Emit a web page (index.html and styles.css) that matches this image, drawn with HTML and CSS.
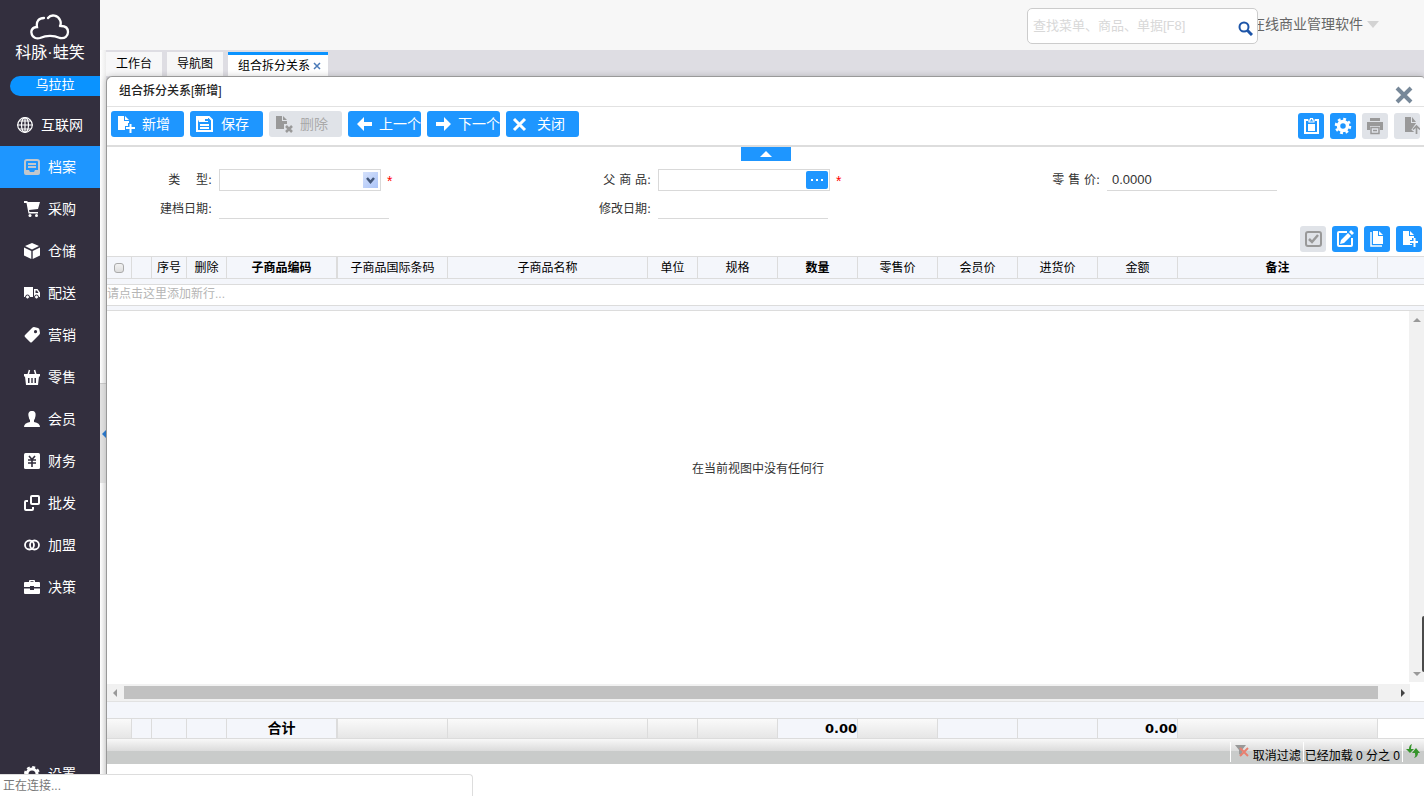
FILE: index.html
```
<!DOCTYPE html>
<html lang="zh-CN">
<head>
    <meta charset="UTF-8">
    <meta name="viewport" content="width=device-width, initial-scale=1.0">
    <title>组合拆分关系</title>
    <link rel="stylesheet" href="styles.css">
</head>
<body>
    <aside class="sidebar">
        <div class="logo">
            <svg width="40" height="27" viewBox="0 0 40 27" fill="none" stroke="#fff" stroke-width="2.300" stroke-linecap="round">
                <path d="M14 4C9 4 6 7 7 13C2 13 1 17 1.500 19C2 24 7 25 10 24C17 21 23 21 30 24C35 25 38 22 38 18C38 14 35 12 31 12"/>
                <path d="M18 4C21 0 28 1 30 6C31 8 31 10 30 12"/>
            </svg>
            <span class="logo-text">科脉·蛙笑</span>
        </div>
        <div class="shop">乌拉拉</div>
        <nav class="menu">
            <a href="#">
                <svg class="ico" viewBox="0 0 16 16" fill="none" stroke="#fff" stroke-width="1.200"><circle cx="8" cy="8" r="7.300"/><ellipse cx="8" cy="8" rx="3.500" ry="7.300"/><path d="M8 0V16M0 8H16M2 4H14M2 12H14"/></svg>
                互联网
            </a>
            <a href="#" class="active">
                <svg class="ico" viewBox="0 0 16 16" fill="none" stroke="#c3c7cc" stroke-width="2"><path d="M1 12V3Q1 1 3 1H13Q15 1 15 3V12M4 5H12M4 8H12"/><path d="M0 11H5L6 13H10L11 11H16V14Q16 16 14 16H2Q0 16 0 14Z" fill="#c3c7cc" stroke="none"/></svg>
                档案
            </a>
            <a href="#">
                <svg class="ico" viewBox="0 0 16 16" fill="#fff"><path d="M0 0H3L4 1H16L14 8L5 9L5.500 11H14V12.500H4.500L2.500 2H0Z"/><circle cx="6" cy="14.500" r="1.500"/><circle cx="12.500" cy="14.500" r="1.500"/></svg>
                采购
            </a>
            <a href="#">
                <svg class="ico" viewBox="0 0 16 16" fill="#fff"><path d="M8 0L15 3L8 6.500L1 3ZM0 4.500L7.300 8V16L0 12.500ZM16 4.500L8.700 8V16L16 12.500Z"/></svg>
                仓储
            </a>
            <a href="#">
                <svg class="ico" viewBox="0 0 16 16" fill="#fff"><path fill-rule="evenodd" d="M0 2H9V12H0ZM10 4H13.500L16 7.500V12H10ZM11.500 5.500V8H14.500L13 5.500Z"/><g stroke="#332f3e"><circle cx="3.500" cy="12" r="2"/><circle cx="12.500" cy="12" r="2"/></g></svg>
                配送
            </a>
            <a href="#">
                <svg class="ico" viewBox="0 0 16 16" fill="#fff"><path fill-rule="evenodd" d="M8 1Q9 0 10 0L14 1Q15.500 1.500 15.500 3L16 6Q16 7 15 8L8 15Q7 16 6 15L1 10Q0 9 1 8ZM11.500 3A1.600 1.600 0 1 0 11.600 6.200A1.600 1.600 0 1 0 11.500 3Z"/></svg>
                营销
            </a>
            <a href="#">
                <svg class="ico" viewBox="0 0 16 16" fill="none" stroke="#fff"><path d="M4 6L5.500 1M12 6L10.500 1" stroke-width="1.500"/><path fill="#fff" stroke="none" fill-rule="evenodd" d="M0 5H16V7.500H15L14 16H2L1 7.500H0ZM4 9V14H5.500V9ZM7.300 9V14H8.700V9ZM10.500 9V14H12V9Z"/></svg>
                零售
            </a>
            <a href="#">
                <svg class="ico" viewBox="0 0 16 16" fill="#fff"><path d="M8 0C11 0 12 2 11.500 5Q11 8 10 9V11Q16 12 16 16H0Q0 12 6 11V9Q5 8 4.500 5C4 2 5 0 8 0Z"/></svg>
                会员
            </a>
            <a href="#">
                <svg class="ico" viewBox="0 0 16 16"><rect width="16" height="16" rx="1.500" fill="#fff"/><path d="M5 3L8 6.500L11 3M4 7H12M4 10H12M8 6.500V14" fill="none" stroke="#332f3e" stroke-width="1.600"/></svg>
                财务
            </a>
            <a href="#">
                <svg class="ico" viewBox="0 0 16 16" fill="none" stroke="#fff" stroke-width="2"><rect x="7" y="1" width="8" height="8" rx="1"/><path d="M4 6H2Q1 6 1 7V14Q1 15 2 15H8Q9 15 9 14V12"/></svg>
                批发
            </a>
            <a href="#">
                <svg class="ico" viewBox="0 0 16 16" fill="none" stroke="#fff" stroke-width="1.800"><circle cx="5.500" cy="8" r="4.500"/><circle cx="10.500" cy="8" r="4.500"/></svg>
                加盟
            </a>
            <a href="#">
                <svg class="ico" viewBox="0 0 16 16" fill="#fff"><path fill-rule="evenodd" d="M5 3V2Q5 1 6 1H10Q11 1 11 2V3H15Q16 3 16 4V8H10V7H6V8H0V4Q0 3 1 3ZM6.500 2.300V3H9.500V2.300ZM0 9.500H6V11H10V9.500H16V14Q16 15 15 15H1Q0 15 0 14Z"/></svg>
                决策
            </a>
            <a href="#" class="setting">
                <svg class="ico" viewBox="0 0 16 16" fill="none" stroke="#fff"><circle cx="8" cy="8" r="5" stroke-width="3"/><circle cx="8" cy="8" r="7" stroke-width="2" stroke-dasharray="3 2.500"/></svg>
                设置
            </a>
        </nav>
    </aside>

    <div class="main">
        <header class="header">
            <label class="search">
                <input type="text" placeholder="查找菜单、商品、单据[F8]" aria-label="查找">
                <svg width="15" height="15" viewBox="0 0 15 15" fill="none" stroke="#1d55a8" stroke-width="2"><circle cx="6" cy="6" r="4.500"/><path d="M9.500 9.500L14 14" stroke-width="3"/></svg>
            </label>
            <div class="user">在线商业管理软件<i class="caret"></i></div>
        </header>

        <div class="workspace">
            <div class="splitter"><button class="splitter-bar" aria-label="收起"></button></div>
            <div class="content">
                <div class="tabs">
                    <a href="#" class="tab">工作台</a>
                    <a href="#" class="tab">导航图</a>
                    <a href="#" class="tab tab-on">组合拆分关系<svg width="8" height="8" viewBox="0 0 8 8" stroke="#4a7ab8" stroke-width="1.500"><path d="M1 1L7 7M7 1L1 7"/></svg></a>
                </div>

                <section class="window">
                    <div class="title-bar">
                        <h1>组合拆分关系[新增]</h1>
                        <button class="close" aria-label="关闭窗口"><svg width="18" height="18" viewBox="0 0 18 18" stroke="#778899" stroke-width="4"><path d="M2 2L16 16M16 2L2 16"/></svg></button>
                    </div>

                    <div class="toolbar">
                        <button class="btn"><svg viewBox="0 0 18 18" fill="#fff"><path d="M1 1H7V6H12V15H1ZM8 1L12 5H8Z"/><path d="M8 13H18M13 8V18" stroke="#1e96ff" stroke-width="4"/><path d="M9 13H18M13.500 9V18" stroke="#fff" stroke-width="2"/></svg>新增</button>
                        <button class="btn"><svg viewBox="0 0 18 18" fill="none" stroke="#fff" stroke-width="2"><path d="M1 2H13L16 5V16H1ZM4 10H13M4 13H13"/><path d="M1 2H12V7H3Z" fill="#fff" stroke="none"/><path d="M9 5H12" stroke="#1e96ff"/></svg>保存</button>
                        <button class="btn" disabled><svg viewBox="0 0 18 18" fill="#999"><path d="M1 1H7V6H12V9H9V14H1ZM8 1L12 5H8Z"/><path d="M11 11L17 17M17 11L11 17" stroke="#999" stroke-width="2.500"/></svg>删除</button>
                        <button class="btn"><svg viewBox="0 0 18 18" fill="#fff"><path d="M3 9L10 2V7H18V11H10V16Z"/></svg>上一个</button>
                        <button class="btn"><svg viewBox="0 0 18 18" fill="#fff"><path d="M18 9L11 2V7H3V11H11V16Z"/></svg>下一个</button>
                        <button class="btn"><svg viewBox="0 0 18 18" stroke="#fff" stroke-width="3"><path d="M2 4L13 15M13 4L2 15"/></svg>关闭</button>
                        <div class="tools">
                            <button class="tool" aria-label="粘贴"><svg viewBox="0 0 18 18" fill="none" stroke="#fff"><rect x="3" y="3" width="13" height="13" stroke-width="2"/><path d="M6 1H13V6H6Z" fill="#1e96ff" stroke="none"/><path d="M7 5V3H8.500V1.500H10.500V3H12V5Z" stroke-width="1.200"/><path d="M6 7H13V14H6Z" fill="#fff" stroke="none"/></svg></button>
                            <button class="tool" aria-label="设置"><svg viewBox="0 0 18 18" fill="none" stroke="#fff"><circle cx="9" cy="9" r="4.500" stroke-width="3.500"/><circle cx="9" cy="9" r="7" stroke-width="2.500" stroke-dasharray="2.800 2.700"/></svg></button>
                            <button class="tool" disabled aria-label="打印"><svg viewBox="0 0 18 18" fill="#999"><path d="M4 1H14V4H4ZM1 5H17V13H14V9H4V13H1Z"/><path d="M5 10.500H13V16.500H5ZM7 13.500H11" fill="none" stroke="#999" stroke-width="1.500"/></svg></button>
                            <button class="tool tool-export" disabled aria-label="导出"><svg viewBox="0 0 18 18" fill="#999"><path d="M3 0H9V6H14V15H3ZM10 0L14 5H10Z"/><path d="M14.500 18V8M11 14L14.500 9L18 14" fill="none" stroke="#e0e3e8" stroke-width="4"/><path d="M14.500 17V10M11 12.500L14.500 9L18 12.500" fill="none" stroke="#999" stroke-width="1.700"/></svg></button>
                        </div>
                    </div>

                    <div class="form">
                        <button class="fold" aria-label="折叠"></button>
                        <div class="fields">
                            <div class="field">
                                <label for="type">类　 型:</label>
                                <div class="combo">
                                    <select id="type"><option></option></select>
                                    <span class="combo-arrow"><svg width="9" height="7" viewBox="0 0 9 7" fill="none" stroke="#43577a" stroke-width="2.500"><path d="M1 1L4.500 5L8 1"/></svg></span>
                                </div>
                                <span class="must">*</span>
                            </div>
                            <div class="field">
                                <label for="parent">父 商 品:</label>
                                <div class="lookup">
                                    <input type="text" id="parent">
                                    <button aria-label="选择"><i></i><i></i><i></i></button>
                                </div>
                                <span class="must">*</span>
                            </div>
                            <div class="field field-price">
                                <label for="price">零 售 价:</label>
                                <input class="line" type="text" id="price" value="0.0000">
                            </div>
                            <div class="field">
                                <label for="created">建档日期:</label>
                                <input class="line" type="text" id="created" readonly>
                            </div>
                            <div class="field">
                                <label for="updated">修改日期:</label>
                                <input class="line" type="text" id="updated" readonly>
                            </div>
                        </div>
                        <div class="tools grid-tools">
                            <button class="tool" disabled aria-label="全选"><svg viewBox="0 0 18 18" fill="none" stroke="#999" stroke-width="2"><rect x="2" y="2" width="15" height="14" rx="2"/><path d="M5 9L8 12L14 5" stroke-width="2.500"/></svg></button>
                            <button class="tool" aria-label="编辑"><svg viewBox="0 0 18 18" fill="none" stroke="#fff" stroke-width="2"><path d="M11 2H3Q2 2 2 3V15Q2 16 3 16H15Q16 16 16 15V8"/><path d="M4 14L5 10L12 3L15 6L8 13ZM13 2L15 0L18 3L16 5Z" fill="#fff" stroke="none"/></svg></button>
                            <button class="tool" aria-label="复制"><svg viewBox="0 0 18 18" fill="#fff"><path d="M5 1H10V6H15V14H5ZM11 1L15 5H11Z"/><path d="M3 2V16H14" fill="none" stroke="#fff" stroke-width="1.500"/></svg></button>
                            <button class="tool" aria-label="新增行"><svg viewBox="0 0 18 18" fill="#fff"><path d="M3 1H9V6H14V15H3ZM10 1L14 5H10Z"/><path d="M10 12H18M14 8V18" stroke="#1e96ff" stroke-width="4"/><path d="M10 12H18M14.500 8V17" stroke="#fff" stroke-width="2"/></svg></button>
                        </div>
                    </div>

                    <table class="grid">
                        <colgroup>
                            <col class="w25"><col class="w20"><col class="w35"><col class="w40"><col class="w111"><col class="w110"><col class="w200"><col class="w50">
                            <col class="w80"><col class="w80"><col class="w80"><col class="w80"><col class="w80"><col class="w80"><col class="w200"><col>
                        </colgroup>
                        <thead>
                            <tr>
                                <th><input type="checkbox" class="check" aria-label="全选"></th>
                                <th></th>
                                <th>序号</th>
                                <th>删除</th>
                                <th class="key wide-line">子商品编码</th>
                                <th>子商品国际条码</th>
                                <th>子商品名称</th>
                                <th>单位</th>
                                <th>规格</th>
                                <th class="key">数量</th>
                                <th>零售价</th>
                                <th>会员价</th>
                                <th>进货价</th>
                                <th>金额</th>
                                <th class="key">备注</th>
                                <th></th>
                            </tr>
                        </thead>
                    </table>
                    <div class="new-row"><input type="text" placeholder="请点击这里添加新行..." aria-label="添加新行"></div>

                    <div class="grid-body">
                        <div class="empty">在当前视图中没有任何行</div>
                        <div class="vscroll"><i class="up"></i><i class="down"></i></div>
                    </div>
                    <div class="hscroll"><i class="left"></i><span class="thumb"></span><i class="right"></i></div>

                    <div class="band"></div>
                    <table class="grid total">
                        <colgroup>
                            <col class="w25"><col class="w20"><col class="w35"><col class="w40"><col class="w111"><col class="w110"><col class="w200"><col class="w50">
                            <col class="w80"><col class="w80"><col class="w80"><col class="w80"><col class="w80"><col class="w80"><col class="w200"><col>
                        </colgroup>
                        <tbody>
                            <tr>
                                <td class="shade"></td>
                                <td></td>
                                <td></td>
                                <td></td>
                                <td class="sum-label wide-line">合计</td>
                                <td class="shade"></td>
                                <td class="shade"></td>
                                <td class="shade"></td>
                                <td class="shade"></td>
                                <td class="sum">0.00</td>
                                <td class="shade"></td>
                                <td></td>
                                <td></td>
                                <td class="sum">0.00</td>
                                <td class="shade"></td>
                                <td class="blank"></td>
                            </tr>
                        </tbody>
                    </table>
                    <div class="status">
                        <button class="status-item">
                            <svg width="16" height="14" viewBox="0 0 16 14"><path d="M1 1H12L8 6V12L5 10V6Z" fill="#999"/><path d="M6 4L14 12M14 4L6 12" stroke="#e88070" stroke-width="2"/></svg>
                            取消过滤
                        </button>
                        <span class="status-item">已经加载 0 分之 0</span>
                        <button class="status-item refresh" aria-label="刷新"><svg width="14" height="14" viewBox="0 0 14 14" fill="#35942b"><path d="M6 0Q3 1 3 5H0L4 9L8 5H5Q5 2 6 0ZM8 14Q12 13 12 9H14L10 4L6 9H9Q10 12 8 14Z"/></svg></button>
                    </div>
                </section>
            </div>
        </div>
    </div>

    <div class="side-grip"></div>
    <div class="loading">正在连接...</div>
</body>
</html>
```
FILE: styles.css
```
* {
    box-sizing: border-box;
}
body {
    margin: 0;
    display: flex;
    height: 100vh;
    overflow: hidden;
    font-family: "Liberation Sans", "Noto Sans CJK SC", sans-serif;
    font-size: 12px;
    color: #333;
    background: #fff;
}
a {
    color: inherit;
    text-decoration: none;
}
button, input, select {
    font: inherit;
    color: inherit;
    margin: 0;
    padding: 0;
    border: 0;
    outline: none;
    background: none;
}
svg {
    display: block;
    flex: none;
}

/* 左侧菜单 */
.sidebar {
    flex: none;
    width: 100px;
    display: flex;
    flex-direction: column;
    background: #332f3e;
    color: #fff;
}
.logo {
    height: 76px;
    padding-top: 14px;
    display: flex;
    flex-direction: column;
    align-items: center;
}
.logo-text {
    font-size: 16px;
    line-height: 24px;
}
.shop {
    height: 20px;
    margin-left: 10px;
    border-radius: 10px 0 0 10px;
    background: #0a93ff;
    font-size: 13px;
    line-height: 18px;
    text-align: center;
}
.menu {
    flex: 1;
    display: flex;
    flex-direction: column;
    padding: 8px 0 1px;
    font-size: 14px;
}
.menu a {
    flex: none;
    height: 42px;
    padding-bottom: 2px;
    display: flex;
    align-items: center;
    justify-content: center;
    gap: 8px;
}
.menu .active {
    background: #1e96ff;
}
.menu .setting {
    margin-top: auto;
}
.ico {
    width: 16px;
    height: 16px;
    margin-top: 2px;
}

/* 顶部 */
.main {
    flex: 1;
    min-width: 0;
    display: flex;
    flex-direction: column;
}
.header {
    flex: none;
    height: 50px;
    padding: 0 45px 0 0;
    display: flex;
    align-items: center;
    justify-content: flex-end;
    background: #f7f7f7;
}
.search {
    z-index: 1;
    width: 231px;
    height: 36px;
    margin: 2px 0 0;
    padding: 0 4px 0 5px;
    display: flex;
    align-items: center;
    border: 1px solid #ccc;
    border-radius: 5px;
    background: #fff;
}
.search input {
    flex: 1;
    min-width: 0;
    padding-bottom: 2px;
    font-size: 13px;
}
.search svg {
    margin-top: 5px;
}
.search ::placeholder {
    color: #d8d8d8;
}
.user {
    margin-left: -7px;
    display: flex;
    align-items: center;
    gap: 4px;
    font-size: 14px;
    line-height: 20px;
    padding-bottom: 2px;
    color: #666;
}
.caret {
    border: 6px solid transparent;
    border-top: 7px solid #d3d3d3;
    border-bottom: 0;
}

/* 工作区 */
.workspace {
    flex: 1;
    min-height: 0;
    display: flex;
}
.splitter {
    flex: none;
    width: 6px;
    display: flex;
    align-items: center;
    background: linear-gradient(to right, #fff, #ececec);
}
.splitter-bar {
    width: 6px;
    height: 100px;
    margin-top: 20px;
    border-top: 1px solid #ccc;
    background: #e3e3e3;
    display: flex;
    align-items: center;
    justify-content: flex-end;
}
.splitter-bar::after {
    content: "";
    border: 4px solid transparent;
    border-left: 0;
    border-right-color: #2b7cd3;
}
.content {
    flex: 1;
    min-width: 0;
    display: flex;
    flex-direction: column;
    background: #dedde3;
}
.tabs {
    flex: none;
    height: 26px;
    padding-top: 2px;
    display: flex;
    gap: 5px;
    color: #000;
}
.tab {
    padding: 0 10px;
    background: #f7f7f8;
    line-height: 25px;
}
.tab-on {
    display: flex;
    align-items: center;
    gap: 3px;
    padding-right: 7px;
    border-top: 3px solid #0a93ff;
    background: #fff;
    line-height: 20px;
}
.window {
    flex: 1;
    min-height: 0;
    padding-bottom: 32px;
    display: flex;
    flex-direction: column;
    border: 1px solid #999;
    border-width: 1px 0 0 1px;
    border-radius: 6px 3px 0 0;
    background: #fff;
    box-shadow: 0 0 6px rgba(0,0,0,0.2);
}
.title-bar {
    flex: none;
    height: 30px;
    padding: 0 11px 0 12px;
    display: flex;
    justify-content: space-between;
    border-bottom: 1px solid #e2e2e2;
}
.title-bar h1 {
    margin: 0;
    font-size: 12px;
    font-weight: 500;
    line-height: 28px;
    color: #222;
}
.close {
    padding-top: 6px;
}
.toolbar {
    flex: none;
    height: 40px;
    padding: 4px 4px 0;
    display: flex;
    align-items: flex-start;
    gap: 6px;
    border-bottom: 2px solid #ddd;
}
.btn {
    width: 73px;
    height: 26px;
    padding-left: 6px;
    display: flex;
    align-items: center;
    gap: 7px;
    overflow: hidden;
    white-space: nowrap;
    border-radius: 3px;
    background: #1e96ff;
    color: #fff;
    font-size: 14px;
    line-height: 24px;
}
.btn svg, .tool svg {
    width: 18px;
    height: 18px;
}
.btn:disabled, .tool:disabled {
    background: #e0e3e8;
    color: #aaa;
}
.tools {
    display: flex;
    gap: 6px;
    margin: 2px 0 0 auto;
}
.tool {
    width: 26px;
    height: 26px;
    display: flex;
    align-items: center;
    justify-content: center;
    border-radius: 3px;
    background: #1e96ff;
}
.tool-export {
    justify-content: flex-end;
}

/* 表单 */
.form {
    flex: none;
    display: flex;
    flex-direction: column;
    padding-bottom: 4px;
}
.fold {
    width: 50px;
    height: 14px;
    margin: 0 auto 8px;
    display: flex;
    align-items: center;
    justify-content: center;
    background: #1e96ff;
}
.fold::after {
    content: "";
    border: 6px solid transparent;
    border-top: 0;
    border-bottom-color: #fff;
}
.fields {
    display: grid;
    grid-template-columns: repeat(3, 1fr);
    grid-template-rows: 22px 20px;
    row-gap: 8px;
}
.field {
    display: flex;
    align-items: center;
    gap: 6px;
}
.field label {
    width: 106px;
    padding-right: 1px;
    font-family: "DejaVu Sans", "Noto Sans CJK SC", sans-serif;
    line-height: 18px;
    text-align: right;
    white-space: pre;
}
.field-price label {
    width: 116px;
}
.combo {
    position: relative;
    width: 162px;
    height: 22px;
    border: 1px solid #d9d9d9;
}
.combo select {
    width: 100%;
    height: 100%;
    appearance: none;
}
.combo-arrow {
    position: absolute;
    top: 2px;
    right: 2px;
    width: 15px;
    height: 16px;
    display: flex;
    align-items: center;
    justify-content: center;
    background: linear-gradient(135deg, #d5e1fb, #abc4f8);
    pointer-events: none;
}
.must {
    color: #f00;
    font-size: 14px;
    line-height: 18px;
    padding-top: 2px;
}
.lookup {
    width: 172px;
    height: 22px;
    padding: 1px;
    display: flex;
    border: 1px solid #d9d9d9;
}
.lookup input {
    flex: 1;
    min-width: 0;
}
.lookup button {
    width: 22px;
    display: flex;
    align-items: center;
    justify-content: center;
    gap: 3px;
    border-radius: 2px;
    background: #1e96ff;
}
.lookup i {
    width: 2px;
    height: 2px;
    background: #fff;
}
.line {
    width: 170px;
    height: 100%;
    padding: 0 5px;
    border-bottom: 1px solid #d9d9d9;
    font-size: 13px;
}
.grid-tools {
    margin-top: 7px;
    padding-right: 2px;
}

/* 表格 */
.grid {
    flex: none;
    width: 100%;
    table-layout: fixed;
    border-collapse: separate;
    border-spacing: 0;
    background: #f4f6fb;
    color: #000;
}
.grid th, .grid td {
    height: 23px;
    padding: 0;
    overflow: hidden;
    white-space: nowrap;
    border: 1px solid #dcdcdc;
    border-width: 1px 1px 1px 0;
    font-weight: normal;
    line-height: 20px;
    text-align: center;
}
.grid .key {
    font-weight: bold;
}
.grid .wide-line {
    border-right-width: 2px;
}
.grid th:last-child, .grid td:last-child {
    border-right: 0;
}
.w20 { width: 20px; }
.w25 { width: 25px; }
.w35 { width: 35px; }
.w40 { width: 40px; }
.w50 { width: 50px; }
.w80 { width: 80px; }
.w110 { width: 110px; }
.w111 { width: 111px; }
.w200 { width: 200px; }
.check {
    display: block;
    width: 10px;
    height: 10px;
    margin: 0 auto;
    appearance: none;
    border: 1px solid #aaa;
    border-radius: 3px;
    background: linear-gradient(#f2f2f2, #ddd);
}
.new-row {
    flex: none;
    height: 32px;
    padding: 5px 0 4px;
    display: flex;
    background: #f4f6fb;
    border-bottom: 1px solid #dcdcdc;
}
.new-row input {
    flex: 1;
    padding-bottom: 2px;
    border: 1px solid #dcdcdc;
    border-width: 1px 0;
    background: #fff;
}
.new-row ::placeholder {
    color: #b5b5b5;
}
.grid-body {
    flex: 1;
    min-height: 0;
    display: flex;
}
.empty {
    flex: 1;
    padding: 0 0 58px;
    display: flex;
    align-items: center;
    justify-content: center;
}
.vscroll {
    width: 15px;
    padding: 7px 3px 6px;
    display: flex;
    flex-direction: column;
    justify-content: space-between;
    align-items: center;
    background: #f1f1f1;
}
.up, .down {
    border: 4px solid transparent;
}
.up {
    border-top: 0;
    border-bottom-color: #999;
}
.down {
    border-bottom: 0;
    border-top-color: #999;
}
.hscroll {
    flex: none;
    height: 17px;
    margin: 2px 14px 0 0;
    padding: 2px 5px 2px 6px;
    display: flex;
    align-items: center;
    background: #f1f1f1;
}
.thumb {
    flex: 1;
    height: 13px;
    margin: 0 23px 0 7px;
    background: #c1c1c1;
}
.left, .right {
    border: 4px solid transparent;
}
.left {
    border-left: 0;
    border-right-color: #999;
}
.right {
    border-right: 0;
    border-left-color: #444;
}
.band {
    flex: none;
    height: 17px;
    border-top: 1px solid #e2e2e2;
    background: #f4f6fb;
}
.total td {
    height: 21px;
    line-height: 19px;
}
.total .shade {
    background: linear-gradient(#fafafa, #e6e6e6);
}
.total .blank {
    background: #fff;
}
.total .sum-label {
    font-size: 14px;
    font-weight: bold;
}
.total .sum {
    font-family: "DejaVu Sans", sans-serif;
    font-size: 13px;
    font-weight: bold;
    text-align: right;
}
.status {
    flex: none;
    height: 25px;
    padding-right: 2px;
    display: flex;
    justify-content: flex-end;
    background: linear-gradient(#f8f8f8, #dadada 50%, #c9cbca 50%);
    color: #000;
}
.status-item {
    height: 20px;
    margin-top: 3px;
    padding: 4px 2px 0 1px;
    display: flex;
    align-items: center;
    gap: 3px;
    border-left: 1px solid #fff;
    white-space: nowrap;
}
.status-item svg {
    margin: 0 0 7px 2px;
}

/* 浮层 */
.side-grip {
    position: absolute;
    right: 0;
    top: 616px;
    width: 2px;
    height: 56px;
    border-radius: 3px 0 0 3px;
    background: #4a4a4a;
}
.loading {
    position: absolute;
    left: 0;
    bottom: 0;
    width: 473px;
    height: 22px;
    padding-left: 3px;
    border: 1px solid #ddd;
    border-width: 1px 1px 0 0;
    border-radius: 0 4px 0 0;
    background: #fff;
    color: #777;
    line-height: 22px;
}
```
